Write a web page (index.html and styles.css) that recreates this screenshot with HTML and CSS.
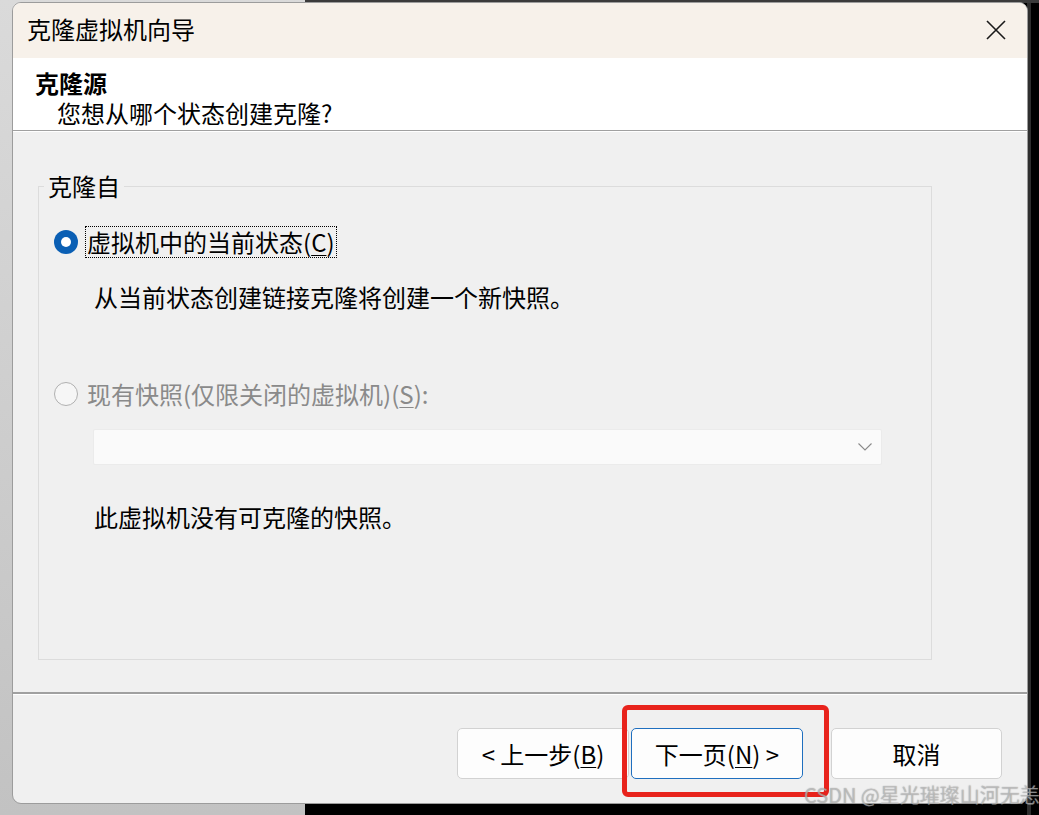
FILE: index.html
```html
<!DOCTYPE html>
<html lang="zh-CN">
<head>
<meta charset="utf-8">
<title>克隆虚拟机向导</title>
<link rel="stylesheet" href="styles.css">
</head>
<body>
<div class="window">
  <div class="titlebar">
    <span class="title">克隆虚拟机向导</span>
    <svg class="close" width="20" height="20" viewBox="0 0 20 20"><path d="M1 1 L19 19 M19 1 L1 19" stroke="#1a1a1a" stroke-width="1.6" fill="none"/></svg>
  </div>
  <div class="header">
    <div class="h-title">克隆源</div>
    <div class="h-sub">您想从哪个状态创建克隆?</div>
  </div>
  <div class="sep"></div>
  <div class="content">
    <fieldset class="group">
      <legend class="legend">克隆自</legend>
      <div class="radio-row first">
        <span class="radio checked"></span>
        <span class="label focus">虚拟机中的当前状态(<u>C</u>)</span>
      </div>
      <div class="desc">从当前状态创建链接克隆将创建一个新快照。</div>
      <div class="radio-row second">
        <span class="radio disabled"></span>
        <span class="label dim">现有快照(仅限关闭的虚拟机)(<u>S</u>):</span>
      </div>
      <div class="combo">
        <svg class="chev" width="14" height="8" viewBox="0 0 14 8"><path d="M0.5 0.5 L7 7 L13.5 0.5" stroke="#8a8a8a" stroke-width="1.1" fill="none"/></svg>
      </div>
      <div class="desc last">此虚拟机没有可克隆的快照。</div>
    </fieldset>
  </div>
  <div class="sep bottom"></div>
  <div class="footer">
    <button class="btn">&lt; 上一步(<u>B</u>)</button>
    <button class="btn primary">下一页(<u>N</u>) &gt;</button>
    <button class="btn cancel">取消</button>
  </div>
</div>
<div class="highlight"></div>
<div class="watermark">CSDN @星光璀璨山河无恙</div>
</body>
</html>
```
FILE: styles.css
```css
* { box-sizing: border-box; }
html, body { margin: 0; padding: 0; }
body {
  width: 1039px;
  height: 815px;
  overflow: hidden;
  position: relative;
  font-family: "Noto Sans CJK SC", "Noto Sans", sans-serif;
  font-size: 24px;
  color: #000;
  background:
    linear-gradient(#dadada, #c2c2c2) 0 0 / 305px 100% no-repeat,
    linear-gradient(#3b3b3b, #3b3b3b) 0 0 / 100% 3px no-repeat,
    linear-gradient(#2e2e2e, #2e2e2e) 1027px 0 / 4px 100% no-repeat,
    #000;
  padding: 2px 0 0 12px;
}
.window {
  width: 1016px;
  height: 802px;
  border: 1px solid #9c9c9c;
  border-radius: 9px;
  overflow: hidden;
  background: #f0f0f0;
  display: flex;
  flex-direction: column;
}
.titlebar {
  height: 55px;
  flex: none;
  background: #f7f1ea;
  display: flex;
  align-items: center;
  justify-content: space-between;
  padding: 0 21px 3px 14px;
  line-height: 30px;
}
.close { display: block; margin-top: 2px; }
.header {
  height: 72px;
  flex: none;
  background: #fff;
  padding: 10px 0 0 22px;
  line-height: 30px;
}
.h-title { font-weight: bold; }
.h-sub { padding-left: 22px; }
.sep {
  height: 2px;
  flex: none;
  border-top: 1px solid #a0a0a0;
  border-bottom: 1px solid #fff;
}
.sep.bottom { height: 3px; border-top-width: 2px; }
.content {
  flex: 1 1 auto;
  min-height: 0;
  display: flex;
  flex-direction: column;
  padding: 39px 95px 32px 25px;
}
.group {
  flex: 1;
  margin: 0;
  padding: 0;
  border: 1px solid #dcdcdc;
  min-width: 0;
}
.legend {
  margin-left: 5px;
  padding: 0 4px;
  line-height: 30px;
}
.radio-row {
  display: flex;
  align-items: center;
  padding-left: 15px;
  gap: 7px;
  height: 32px;
}
.radio-row.first { margin-top: 25px; }
.radio-row.second { margin-top: 66px; }
.radio {
  width: 24px;
  height: 24px;
  border-radius: 50%;
  flex: none;
}
.radio.checked {
  background: #0a5fb4;
  position: relative;
}
.radio.checked::after {
  content: "";
  position: absolute;
  left: 7px;
  top: 7px;
  width: 10px;
  height: 10px;
  border-radius: 50%;
  background: #fff;
}
.radio.disabled {
  border: 1px solid #b0b0b0;
  background: #f6f6f6;
}
.label {
  line-height: 30px;
  padding: 0 1px;
  border: 1px dotted transparent;
}
.label.focus { border-color: #000; }
.label.dim { color: #8a8a8a; }
u { text-decoration-thickness: 1px; text-underline-offset: 3px; }
.desc {
  line-height: 30px;
  margin: 24px 0 0 55px;
}
.combo {
  margin: 19px 0 0 54px;
  width: 789px;
  height: 36px;
  background: #fafafa;
  border: 1px solid #ebebeb;
  border-radius: 2px;
  display: flex;
  align-items: center;
  justify-content: flex-end;
  padding-right: 9px;
}
.chev { display: block; }
.desc.last { margin-top: 37px; }
.footer {
  flex: 0 0 108px;
  display: flex;
  justify-content: flex-end;
  align-items: flex-start;
  padding: 33px 25px 0 0;
}
.btn {
  width: 172px;
  height: 51px;
  background: #fdfdfd;
  border: 1px solid #d2d2d2;
  border-radius: 5px;
  font-family: inherit;
  font-size: 24px;
  color: #000;
  padding: 0;
  line-height: 30px;
}
.btn.primary {
  margin-left: 2px;
  border-color: #1f6fbf;
}
.btn.cancel {
  margin-left: 28px;
  width: 171px;
}
.highlight {
  position: absolute;
  left: 622px;
  top: 705px;
  width: 207px;
  height: 92px;
  border: 5px solid #e8231c;
  border-radius: 6px;
}
.watermark {
  position: absolute;
  left: 804px;
  top: 782px;
  font-size: 20px;
  line-height: 26px;
  color: rgba(225, 225, 225, 0.5);
  text-shadow: 0 0 1px rgba(90, 90, 90, 0.7);
  white-space: nowrap;
}
```
